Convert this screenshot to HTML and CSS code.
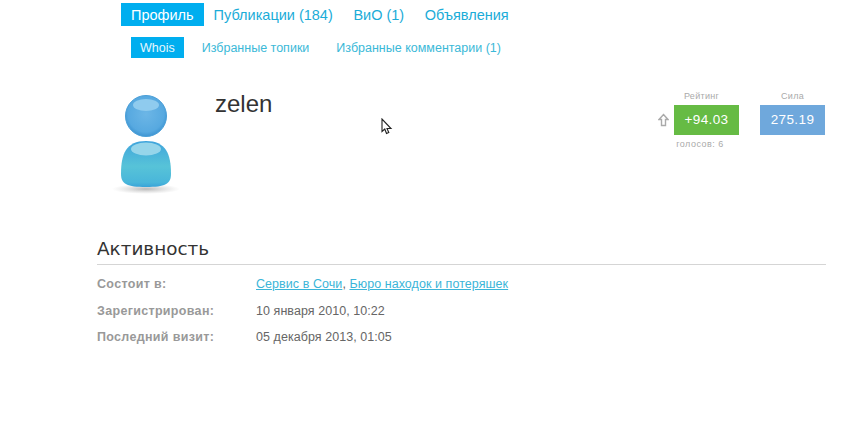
FILE: index.html
```html
<!DOCTYPE html>
<html lang="en">
<head>
  <meta charset="UTF-8">
  <title>zelen</title>
  <link rel="stylesheet" href="styles.css">
</head>
<body>
  <div class="page">
    <ul class="nav-main">
      <li class="active"><a href="#">Профиль</a></li>
      <li><a href="#">Публикации (184)</a></li>
      <li><a href="#">ВиО (1)</a></li>
      <li><a href="#">Объявления</a></li>
    </ul>
    <ul class="nav-sub">
      <li class="active"><a href="#">Whois</a></li>
      <li><a href="#">Избранные топики</a></li>
      <li><a href="#">Избранные комментарии (1)</a></li>
    </ul>

    <div class="profile">
      <svg class="avatar" width="70" height="104" viewBox="0 0 70 104">
        <defs>
          <radialGradient id="head" cx="0.5" cy="0.45" r="0.55">
            <stop offset="0" stop-color="#6cb6e6"/>
            <stop offset="0.8" stop-color="#57a9e0"/>
            <stop offset="1" stop-color="#3d94d2"/>
          </radialGradient>
          <linearGradient id="body" x1="0" y1="0" x2="0" y2="1">
            <stop offset="0" stop-color="#3fa4dc"/>
            <stop offset="0.55" stop-color="#57c3d8"/>
            <stop offset="0.9" stop-color="#49b6da"/>
            <stop offset="1" stop-color="#38a3d8"/>
          </linearGradient>
          <radialGradient id="shadow">
            <stop offset="0" stop-color="#999" stop-opacity="0.7"/>
            <stop offset="1" stop-color="#bbb" stop-opacity="0"/>
          </radialGradient>
        </defs>
        <ellipse cx="35" cy="95" rx="34" ry="5" fill="url(#shadow)"/>
        <circle cx="35" cy="22" r="20.5" fill="url(#head)" stroke="#4a9fd8"/>
        <ellipse cx="35" cy="11" rx="13" ry="6" fill="#8fcbee"/>
        <path d="M10 80 C10 60 15 47 35 47 C55 47 60 60 60 80 C60 90 54 93 35 93 C16 93 10 90 10 80 Z" fill="url(#body)"/>
        <ellipse cx="35" cy="55" rx="15" ry="6.5" fill="#96d5ea"/>
      </svg>
      <h1 class="user-login">zelen</h1>
      <div class="votes">
        <div class="vote-block">
          <div class="vote-label rating-label">Рейтинг</div>
          <div class="vote-row">
            <svg class="vote-up" width="11" height="14" viewBox="0 0 11 14">
              <path d="M5.5 1.5 L10 6.5 H7.5 V12.5 H3.5 V6.5 H1 Z" fill="#fff" stroke="#aaa" stroke-width="1.4"/>
            </svg>
            <div class="vote-box rating">+94.03</div>
          </div>
          <div class="vote-count">голосов: 6</div>
        </div>
        <div class="vote-block">
          <div class="vote-label">Сила</div>
          <div class="vote-box strength">275.19</div>
        </div>
      </div>
    </div>

    <h2 class="section-title">Активность</h2>
    <div class="info-row">
      <div class="info-key">Состоит в:</div>
      <div><a class="group-link" href="#">Сервис в Сочи</a>, <a class="group-link" href="#">Бюро находок и потеряшек</a></div>
    </div>
    <div class="info-row">
      <div class="info-key">Зарегистрирован:</div>
      <div>10 января 2010, 10:22</div>
    </div>
    <div class="info-row">
      <div class="info-key">Последний визит:</div>
      <div>05 декабря 2013, 01:05</div>
    </div>
  </div>

  <svg class="cursor" width="12" height="18" viewBox="0 0 12 18">
    <path d="M1 1 V13.5 L3.8 11 L5.5 15.5 L7.8 14.5 L6 10.5 H10 Z" fill="#fff" stroke="#222" stroke-width="1.1"/>
  </svg>
</body>
</html>
```

FILE: styles.css
```css
body {
  margin: 0;
  background: #fff;
  font-family: 'Liberation Sans', Arial, sans-serif;
  font-size: 12.5px;
  color: #666;
  overflow: hidden;
}

a {
  color: #14b4d8;
  text-decoration: none;
}

ul {
  list-style: none;
  margin: 0;
  padding: 0;
  display: flex;
}

.page {
  width: 728px;
  margin-left: 97px;
  padding-top: 3px;
}

.nav-main {
  margin-left: 24px;
  font-size: 14.5px;
  gap: 0;
}

.nav-main li a {
  display: block;
  height: 23px;
  line-height: 24px;
  padding: 0 10px;
  margin-right: 0.6px;
  color: #1bacd8;
}

.nav-main li.active a {
  background: #00aeef;
  color: #fff;
  margin-right: 0;
}

.nav-sub {
  margin: 11px 0 0 34px;
}

.nav-sub li a {
  display: block;
  height: 21px;
  line-height: 22px;
  padding: 0 9px;
  margin-right: 9px;
  color: #3bb9d8;
}

.nav-sub li.active a {
  background: #00aeef;
  color: #e6f7fd;
}

.profile {
  display: flex;
  align-items: flex-start;
  height: 153px;
  margin-top: 26px;
}

.avatar {
  margin: 10px 0 0 14px;
  flex-shrink: 0;
}

.user-login {
  margin: 5px 0 0 34px;
  font-size: 24px;
  font-weight: normal;
  line-height: 30px;
  color: #333;
}

.votes {
  margin-left: auto;
  display: flex;
  gap: 21px;
  margin-top: 6px;
}

.vote-block {
  display: flex;
  flex-direction: column;
  align-items: flex-end;
}

.vote-label {
  width: 65px;
  text-align: center;
  font-size: 9px;
  line-height: 12px;
  color: #aaa;
  margin-bottom: 3px;
  letter-spacing: 0.3px;
}

.rating-label {
  padding-right: 10px;
  box-sizing: border-box;
}

.vote-row {
  display: flex;
  align-items: center;
  gap: 5px;
}

.vote-box {
  width: 65px;
  height: 30px;
  line-height: 30px;
  text-align: center;
  font-size: 13.5px;
  color: #fff;
  letter-spacing: 0.4px;
}

.rating {
  background: #66bb44;
}

.strength {
  background: #6fa8dc;
}

.vote-count {
  width: 65px;
  box-sizing: border-box;
  padding-right: 13px;
  text-align: center;
  font-size: 9px;
  line-height: 12px;
  color: #aaa;
  margin-top: 3px;
  letter-spacing: 0.5px;
  white-space: nowrap;
}

.section-title {
  margin: 0 -1px 11px 0;
  padding-bottom: 3px;
  font-family: 'DejaVu Sans', sans-serif;
  font-size: 18.4px;
  font-weight: normal;
  line-height: 24px;
  color: #333;
  border-bottom: 1px solid #d5d5d5;
}

.info-row {
  display: flex;
  height: 26.5px;
  line-height: 17px;
  letter-spacing: 0.06px;
}

.info-key {
  width: 159px;
  font-weight: bold;
  color: #999;
  letter-spacing: 0.32px;
}

.group-link {
  color: #3bb5d8;
  text-decoration: underline;
}

.cursor {
  position: absolute;
  left: 381px;
  top: 118px;
}
```
